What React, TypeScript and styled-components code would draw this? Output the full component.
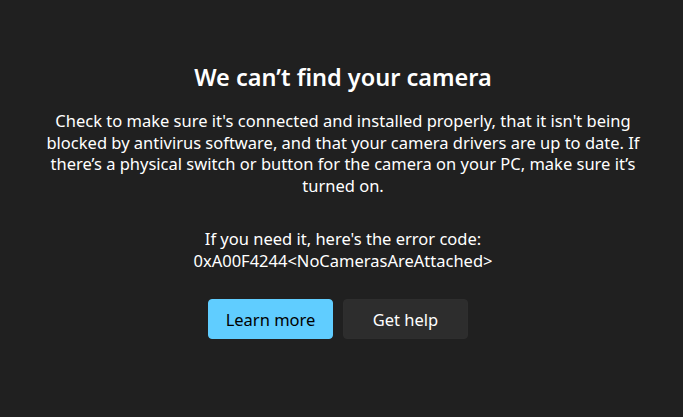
import React from "react";
import styled, { createGlobalStyle } from "styled-components";

const Global = createGlobalStyle`
  html, body { margin: 0; padding: 0; background: #202020; }
  body { font-family: "Segoe UI", "Noto Sans", "Open Sans", sans-serif; }
`;

const Page = styled.main`
  width: 683px;
  height: 417px;
  box-sizing: border-box;
  padding-top: 61px;
  padding-left: 3px;
  background: #202020;
  color: #ffffff;
  display: flex;
  flex-direction: column;
  align-items: center;
`;

const Title = styled.h1`
  margin: 0;
  font-size: 23.5px;
  line-height: 32px;
  font-weight: 600;
  color: #ffffff;
`;

const Body = styled.p`
  margin: 17px 0 0;
  max-width: 596px;
  text-align: center;
  font-size: 16.5px;
  line-height: 21.5px;
  color: #ffffff;
`;

const ErrorText = styled(Body)`
  margin-top: 32px;
`;

const Actions = styled.div`
  display: flex;
  gap: 10px;
  margin-top: 28px;
  margin-right: 10px;
`;

const Button = styled.button<{ $primary?: boolean }>`
  width: 125px;
  height: 40px;
  border-radius: 4px;
  border: 1px solid ${(p) => (p.$primary ? "#60cdff" : "#2e2e2e")};
  background: ${(p) => (p.$primary ? "#60cdff" : "#2d2d2d")};
  color: ${(p) => (p.$primary ? "#000000" : "#ffffff")};
  font-family: inherit;
  font-size: 16.5px;
  padding: 0;
  cursor: pointer;
`;

export default function App() {
  return (
    <>
      <Global />
      <Page>
        <Title>We can’t find your camera</Title>
        <Body>
          Check to make sure it's connected and installed properly, that it isn't being blocked by
          antivirus software, and that your camera drivers are up to date. If there’s a physical
          switch or button for the camera on your PC, make sure it’s turned on.
        </Body>
        <ErrorText>
          If you need it, here's the error code:
          <br />
          0xA00F4244&lt;NoCamerasAreAttached&gt;
        </ErrorText>
        <Actions>
          <Button $primary>Learn more</Button>
          <Button>Get help</Button>
        </Actions>
      </Page>
    </>
  );
}
